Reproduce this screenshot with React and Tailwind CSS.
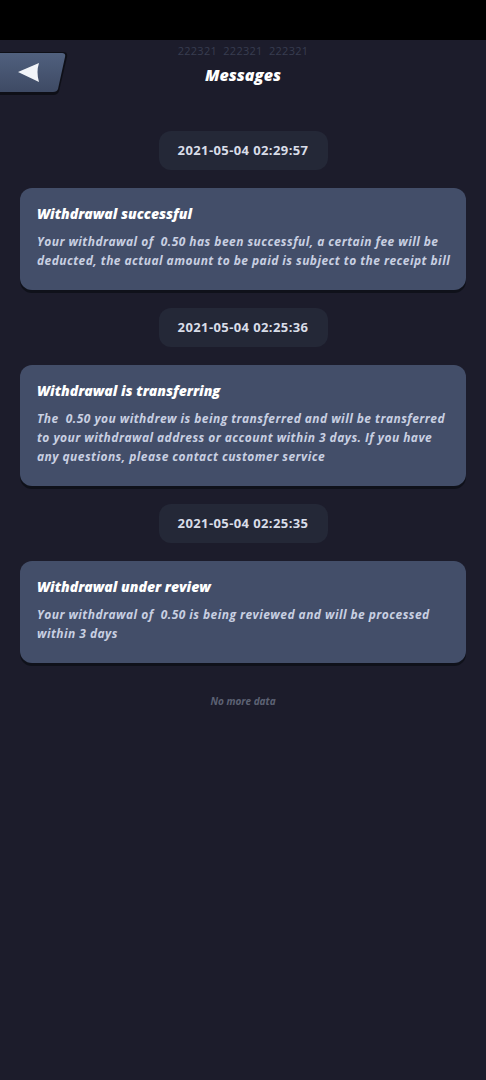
const messages = [
  {
    time: "2021-05-04 02:29:57",
    title: "Withdrawal successful",
    body: "Your withdrawal of  0.50 has been successful, a certain fee will be deducted, the actual amount to be paid is subject to the receipt bill",
  },
  {
    time: "2021-05-04 02:25:36",
    title: "Withdrawal is transferring",
    body: "The  0.50 you withdrew is being transferred and will be transferred to your withdrawal address or account within 3 days. If you have any questions, please contact customer service",
  },
  {
    time: "2021-05-04 02:25:35",
    title: "Withdrawal under review",
    body: "Your withdrawal of  0.50 is being reviewed and will be processed within 3 days",
  },
];

function BackButton() {
  return (
    <button className="w-[70px] h-[46px] block">
      <svg width="70" height="46" viewBox="0 0 70 46">
        <defs>
          <linearGradient id="bb" x1="0" y1="0" x2="0" y2="1">
            <stop offset="0" stopColor="#50607e" />
            <stop offset="1" stopColor="#3e4a64" />
          </linearGradient>
        </defs>
        <path d="M-4 1 H63 Q68 1 67 6 L59 40 Q58 44 53 44 H-4 Z" fill="#0e0f17" />
        <path d="M-4 2 H62 Q66 2 65 6 L58 38 Q57 41 53 41 H-4 Z" fill="url(#bb)" />
        <path d="M18 21 L39 12 Q36 21 39 31 Z" fill="#f2f4f8" />
      </svg>
    </button>
  );
}

export default function App() {
  return (
    <div
      className="min-h-[1080px] bg-[#1c1c2b] flex flex-col"
      style={{ fontFamily: "'Open Sans', Lato, sans-serif" }}
    >
      <div className="h-10 bg-black" />

      {/* HEADER */}
      <div className="relative h-[70px] grid grid-cols-[1fr_auto_1fr] items-center">
        <div className="absolute top-[3px] left-0 right-0 text-center text-[11px] text-[#383c50] tracking-wide">
          222321&nbsp;&nbsp;222321&nbsp;&nbsp;222321
        </div>
        <div className="-mt-[2px]">
          <BackButton />
        </div>
        <h1 className="text-white text-[16px] font-extrabold italic">Messages</h1>
        <div />
      </div>

      {/* LIST */}
      <div className="flex flex-col items-center px-5 pt-[21px]">
        {messages.map((m) => (
          <div key={m.time} className="w-full flex flex-col items-center">
            <div className="w-[169px] h-[39px] rounded-[12px] bg-[#242837] flex items-center justify-center text-[#d9dde8] text-[13px] font-bold tracking-[0.4px]">
              {m.time}
            </div>
            <div className="w-full mt-[18px] mb-[18px] rounded-[12px] bg-[#434e69] shadow-[0_3px_0_#0f111a] pl-[17px] pr-[13px] pt-4 pb-5">
              <h2 className="text-white text-[14px] leading-5 font-extrabold italic">{m.title}</h2>
              <p className="mt-2 text-[#c9d0e2] text-[12px] leading-[19px] font-bold italic whitespace-pre-wrap tracking-[0.45px]">{m.body}</p>
            </div>
          </div>
        ))}
        <p className="mt-[13px] text-[10px] font-bold italic text-[#5d6274]">No more data</p>
      </div>
    </div>
  );
}
